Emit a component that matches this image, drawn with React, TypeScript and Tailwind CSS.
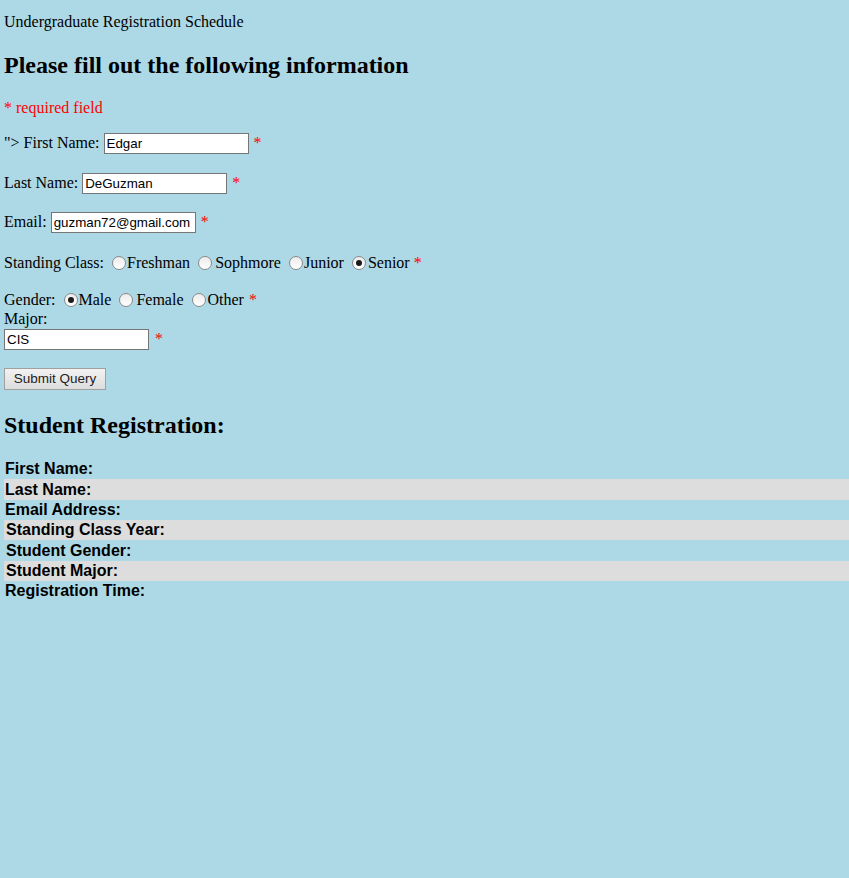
import React from 'react';

const Req = ({ className = '' }: { className?: string }) => (
  <span className={`text-[#ff0000] ${className}`}>*</span>
);

const TextBox = ({ value }: { value: string }) => (
  <input
    type="text"
    defaultValue={value}
    className="h-[21px] w-[145px] border border-[#767676] bg-white px-[2px] font-['Liberation_Sans',Arial,sans-serif] text-[13.33px] text-black outline-none"
  />
);

const Radio = ({ checked = false, className = '' }: { checked?: boolean; className?: string }) => (
  <span
    className={`inline-flex h-[14px] w-[14px] shrink-0 items-center justify-center rounded-full border border-[#8a8a8a] bg-gradient-to-b from-[#ececec] to-white ${className}`}
  >
    {checked && <span className="h-[6px] w-[6px] rounded-full bg-[#1a1a1a]" />}
  </span>
);

const rows = [
  { label: 'First Name:', h: 'h-[20px]', shade: false, pad: 'pl-[1px]' },
  { label: 'Last Name:', h: 'h-[21px]', shade: true, pad: 'pl-[1px]' },
  { label: 'Email Address:', h: 'h-[20px]', shade: false, pad: 'pl-[1px]' },
  { label: 'Standing Class Year:', h: 'h-[20px]', shade: true, pad: 'pl-[2px]' },
  { label: 'Student Gender:', h: 'h-[21px]', shade: false, pad: 'pl-[2px]' },
  { label: 'Student Major:', h: 'h-[20px]', shade: true, pad: 'pl-[2px]' },
  { label: 'Registration Time:', h: 'h-[20px]', shade: false, pad: 'pl-[1px]' },
];

export default function App() {
  return (
    <div className="min-h-screen bg-[#add8e6] pl-[4px] font-['Liberation_Serif','Times_New_Roman',serif] text-[16px] text-black">
      <div className="flex flex-col">
        <p className="mt-[13px] h-[18px] leading-[18px]">Undergraduate Registration Schedule</p>

        <h2 className="mt-[20px] h-[28px] text-[24px] font-bold leading-[28px]">
          Please fill out the following information
        </h2>

        <p className="mt-[20px] h-[18px] leading-[18px] text-[#ff0000]">* required field</p>

        <form className="flex flex-col" onSubmit={(e) => e.preventDefault()}>
          <div className="mt-[15px] flex h-[22px] items-center">
            <span>"&gt; First Name:</span>
            <span className="ml-[4px]">
              <TextBox value="Edgar" />
            </span>
            <Req className="ml-[5px]" />
          </div>

          <div className="mt-[18px] flex h-[22px] items-center">
            <span>Last Name:</span>
            <span className="ml-[4px]">
              <TextBox value="DeGuzman" />
            </span>
            <Req className="ml-[5px]" />
          </div>

          <div className="mt-[17px] flex h-[22px] items-center">
            <span>Email:</span>
            <span className="ml-[4px]">
              <TextBox value="guzman72@gmail.com" />
            </span>
            <Req className="ml-[5px]" />
          </div>

          <div className="mt-[20px] flex h-[20px] items-center">
            <span>Standing Class:</span>
            <Radio className="ml-[8px]" />
            <span className="ml-[1px]">Freshman</span>
            <Radio className="ml-[8px]" />
            <span className="ml-[3px]">Sophmore</span>
            <Radio className="ml-[8px]" />
            <span className="ml-[1px]">Junior</span>
            <Radio checked className="ml-[8px]" />
            <span className="ml-[2px]">Senior</span>
            <Req className="ml-[4px]" />
          </div>

          <div className="mt-[17px] flex h-[20px] items-center">
            <span>Gender:</span>
            <Radio checked className="ml-[8px]" />
            <span className="ml-[1px]">Male</span>
            <Radio className="ml-[8px]" />
            <span className="ml-[3px]">Female</span>
            <Radio className="ml-[8px]" />
            <span className="ml-[2px]">Other</span>
            <Req className="ml-[5px]" />
          </div>

          <div className="h-[18px] leading-[18px]">Major:</div>

          <div className="flex h-[22px] items-center">
            <TextBox value="CIS" />
            <Req className="ml-[6px]" />
          </div>

          <div className="mt-[18px] flex">
            <button
              type="submit"
              className="h-[22px] w-[102px] border border-[#a0a0a0] bg-gradient-to-b from-[#f2f2f2] to-[#dddddd] font-['Liberation_Sans',Arial,sans-serif] text-[13.5px] text-[#222]"
            >
              Submit Query
            </button>
          </div>
        </form>

        <h2 className="mt-[21px] h-[28px] text-[24px] font-bold leading-[28px]">Student Registration:</h2>

        <div className="mt-[20px] flex flex-col font-['Liberation_Sans',Arial,sans-serif] text-[16px] font-bold">
          {rows.map((r) => (
            <div
              key={r.label}
              className={`flex items-center ${r.h} ${r.pad} ${r.shade ? 'bg-[#dddddd]' : ''}`}
            >
              {r.label}
            </div>
          ))}
        </div>
      </div>
    </div>
  );
}
